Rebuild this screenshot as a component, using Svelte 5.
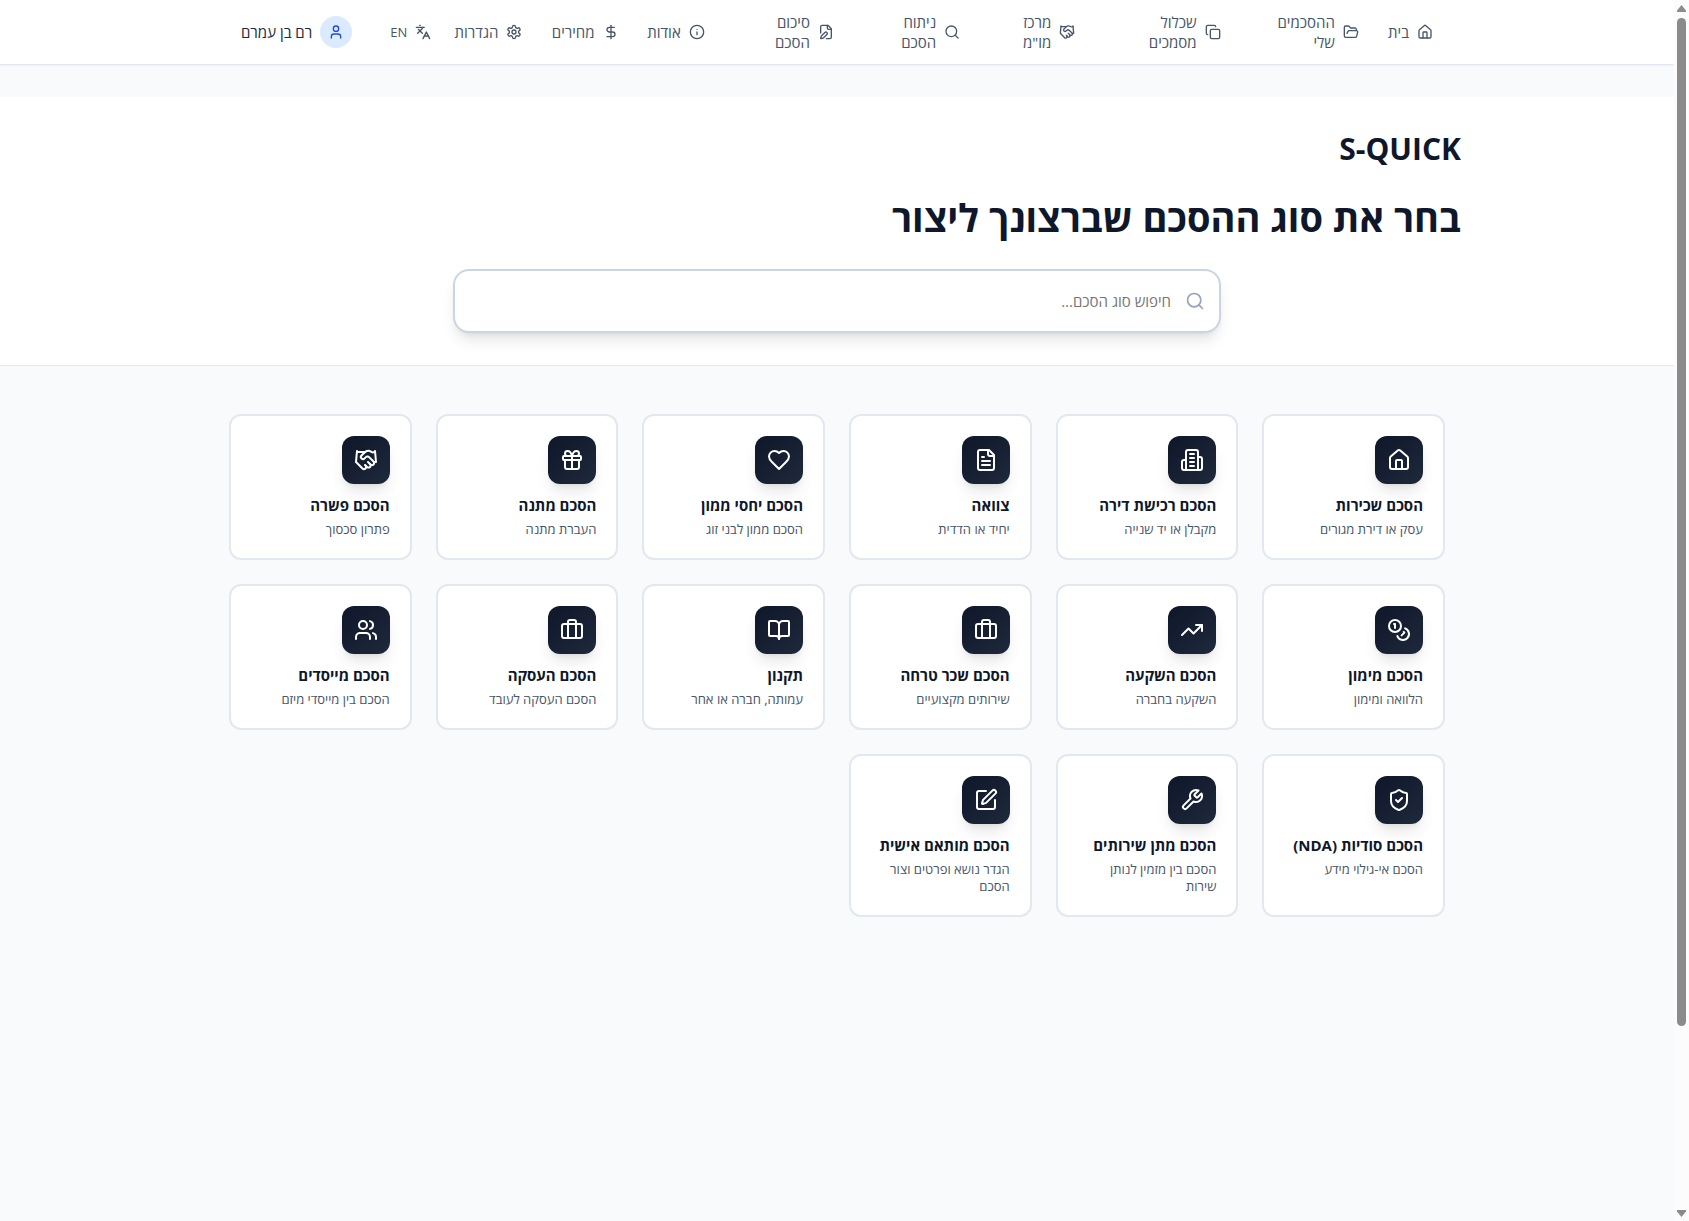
<script lang="ts">
  const icons: Record<string, string[]> = {
    house: [
      "M15 21v-8a1 1 0 0 0-1-1h-4a1 1 0 0 0-1 1v8",
      "M3 10a2 2 0 0 1 .709-1.528l7-5.999a2 2 0 0 1 2.582 0l7 5.999A2 2 0 0 1 21 10v9a2 2 0 0 1-2 2H5a2 2 0 0 1-2-2z",
    ],
    folder: [
      "m6 14 1.5-2.9A2 2 0 0 1 9.24 10H20a2 2 0 0 1 1.94 2.5l-1.54 6a2 2 0 0 1-1.95 1.5H4a2 2 0 0 1-2-2V5a2 2 0 0 1 2-2h3.9a2 2 0 0 1 1.69.9l.81 1.2a2 2 0 0 0 1.67.9H18a2 2 0 0 1 2 2v2",
    ],
    copy: [
      "M10 8h10a2 2 0 0 1 2 2v10a2 2 0 0 1-2 2H10a2 2 0 0 1-2-2V10a2 2 0 0 1 2-2z",
      "M4 16c-1.1 0-2-.9-2-2V4c0-1.1.9-2 2-2h10c1.1 0 2 .9 2 2",
    ],
    handshake: [
      "m11 17 2 2a1 1 0 1 0 3-3",
      "m14 14 2.5 2.5a1 1 0 1 0 3-3l-3.88-3.88a3 3 0 0 0-4.24 0l-.88.88a1 1 0 1 1-3-3l2.81-2.81a5.79 5.79 0 0 1 7.06-.87l.47.28a2 2 0 0 0 1.42.25L21 4",
      "m21 3 1 11h-2",
      "M3 3 2 14l6.5 6.5a1 1 0 1 0 3-3",
      "M3 4h8",
    ],
    search: ["M19 11a8 8 0 1 1-16 0 8 8 0 0 1 16 0z", "m21 21-4.3-4.3"],
    filePen: [
      "M12.5 22H18a2 2 0 0 0 2-2V7l-5-5H6a2 2 0 0 0-2 2v9.5",
      "M14 2v4a2 2 0 0 0 2 2h4",
      "M13.378 15.626a1 1 0 1 0-3.004-3.004l-5.01 5.012a2 2 0 0 0-.506.854l-.837 2.87a.5.5 0 0 0 .62.62l2.87-.837a2 2 0 0 0 .854-.506z",
    ],
    info: ["M22 12a10 10 0 1 1-20 0 10 10 0 0 1 20 0z", "M12 16v-4", "M12 8h.01"],
    dollar: ["M12 2v20", "M17 5H9.5a3.5 3.5 0 0 0 0 7h5a3.5 3.5 0 0 1 0 7H6"],
    settings: [
      "M12.22 2h-.44a2 2 0 0 0-2 2v.18a2 2 0 0 1-1 1.73l-.43.25a2 2 0 0 1-2 0l-.15-.08a2 2 0 0 0-2.73.73l-.22.38a2 2 0 0 0 .73 2.73l.15.1a2 2 0 0 1 1 1.72v.51a2 2 0 0 1-1 1.74l-.15.09a2 2 0 0 0-.73 2.73l.22.38a2 2 0 0 0 2.73.73l.15-.08a2 2 0 0 1 2 0l.43.25a2 2 0 0 1 1 1.73V20a2 2 0 0 0 2 2h.44a2 2 0 0 0 2-2v-.18a2 2 0 0 1 1-1.73l.43-.25a2 2 0 0 1 2 0l.15.08a2 2 0 0 0 2.73-.73l.22-.39a2 2 0 0 0-.73-2.73l-.15-.08a2 2 0 0 1-1-1.74v-.5a2 2 0 0 1 1-1.74l.15-.09a2 2 0 0 0 .73-2.73l-.22-.38a2 2 0 0 0-2.73-.73l-.15.08a2 2 0 0 1-2 0l-.43-.25a2 2 0 0 1-1-1.73V4a2 2 0 0 0-2-2z",
      "M15 12a3 3 0 1 1-6 0 3 3 0 0 1 6 0z",
    ],
    languages: ["m5 8 6 6", "m4 14 6-6 2-3", "M2 5h12", "M7 2h1", "m22 22-5-10-5 10", "M14 18h6"],
    user: ["M19 21v-2a4 4 0 0 0-4-4H9a4 4 0 0 0-4 4v2", "M16 7a4 4 0 1 1-8 0 4 4 0 0 1 8 0z"],
    building: [
      "M6 22V4a2 2 0 0 1 2-2h8a2 2 0 0 1 2 2v18Z",
      "M6 12H4a2 2 0 0 0-2 2v6a2 2 0 0 0 2 2h2",
      "M18 9h2a2 2 0 0 1 2 2v9a2 2 0 0 1-2 2h-2",
      "M10 6h4",
      "M10 10h4",
      "M10 14h4",
      "M10 18h4",
    ],
    fileText: [
      "M15 2H6a2 2 0 0 0-2 2v16a2 2 0 0 0 2 2h12a2 2 0 0 0 2-2V7Z",
      "M14 2v4a2 2 0 0 0 2 2h4",
      "M10 9H8",
      "M16 13H8",
      "M16 17H8",
    ],
    heart: [
      "M19 14c1.49-1.46 3-3.21 3-5.5A5.5 5.5 0 0 0 16.5 3c-1.76 0-3 .5-4.5 2-1.5-1.5-2.74-2-4.5-2A5.5 5.5 0 0 0 2 8.5c0 2.3 1.5 4.05 3 5.5l7 7Z",
    ],
    gift: [
      "M4 8h16a1 1 0 0 1 1 1v2a1 1 0 0 1-1 1H4a1 1 0 0 1-1-1V9a1 1 0 0 1 1-1z",
      "M12 8v13",
      "M19 12v7a2 2 0 0 1-2 2H7a2 2 0 0 1-2-2v-7",
      "M7.5 8a2.5 2.5 0 0 1 0-5A4.8 8 0 0 1 12 8a4.8 8 0 0 1 4.5-5 2.5 2.5 0 0 1 0 5",
    ],
    coins: [
      "M14 8a6 6 0 1 1-12 0 6 6 0 0 1 12 0z",
      "M18.09 10.37A6 6 0 1 1 10.34 18",
      "M7 6h1v4",
      "m16.71 13.88.7.71-2.82 2.82",
    ],
    trending: ["m22 7-8.5 8.5-5-5L2 17", "M16 7h6v6"],
    briefcase: [
      "M16 20V4a2 2 0 0 0-2-2h-4a2 2 0 0 0-2 2v16",
      "M4 6h16a2 2 0 0 1 2 2v10a2 2 0 0 1-2 2H4a2 2 0 0 1-2-2V8a2 2 0 0 1 2-2z",
    ],
    book: [
      "M12 7v14",
      "M3 18a1 1 0 0 1-1-1V4a1 1 0 0 1 1-1h5a4 4 0 0 1 4 4 4 4 0 0 1 4-4h5a1 1 0 0 1 1 1v13a1 1 0 0 1-1 1h-6a3 3 0 0 0-3 3 3 3 0 0 0-3-3z",
    ],
    users: [
      "M16 21v-2a4 4 0 0 0-4-4H6a4 4 0 0 0-4 4v2",
      "M13 7a4 4 0 1 1-8 0 4 4 0 0 1 8 0z",
      "M22 21v-2a4 4 0 0 0-3-3.87",
      "M16 3.13a4 4 0 0 1 0 7.75",
    ],
    shield: [
      "M20 13c0 5-3.5 7.5-7.66 8.95a1 1 0 0 1-.67-.01C7.5 20.5 4 18 4 13V6a1 1 0 0 1 1-1c2 0 4.5-1.2 6.24-2.72a1.17 1.17 0 0 1 1.52 0C14.51 3.81 17 5 19 5a1 1 0 0 1 1 1z",
      "m9 12 2 2 4-4",
    ],
    wrench: [
      "M14.7 6.3a1 1 0 0 0 0 1.4l1.6 1.6a1 1 0 0 0 1.4 0l3.77-3.77a6 6 0 0 1-7.94 7.94l-6.91 6.91a2.12 2.12 0 0 1-3-3l6.91-6.91a6 6 0 0 1 7.94-7.94l-3.76 3.76z",
    ],
    squarePen: [
      "M12 3H5a2 2 0 0 0-2 2v14a2 2 0 0 0 2 2h14a2 2 0 0 0 2-2v-7",
      "M18.375 2.625a1 1 0 0 1 3 3l-9.013 9.014a2 2 0 0 1-.853.505l-2.873.84a.5.5 0 0 1-.62-.62l.84-2.873a2 2 0 0 1 .506-.852z",
    ],
  };

  const navItems = [
    { label: "בית", icon: "house" },
    { label: "ההסכמים שלי", icon: "folder" },
    { label: "שכלול מסמכים", icon: "copy" },
    { label: 'מרכז מו"מ', icon: "handshake" },
    { label: "ניתוח הסכם", icon: "search" },
    { label: "סיכום הסכם", icon: "filePen" },
    { label: "אודות", icon: "info" },
    { label: "מחירים", icon: "dollar" },
    { label: "הגדרות", icon: "settings" },
  ];

  const agreements = [
    { title: "הסכם שכירות", text: "עסק או דירת מגורים", icon: "house" },
    { title: "הסכם רכישת דירה", text: "מקבלן או יד שנייה", icon: "building" },
    { title: "צוואה", text: "יחיד או הדדית", icon: "fileText" },
    { title: "הסכם יחסי ממון", text: "הסכם ממון לבני זוג", icon: "heart" },
    { title: "הסכם מתנה", text: "העברת מתנה", icon: "gift" },
    { title: "הסכם פשרה", text: "פתרון סכסוך", icon: "handshake" },
    { title: "הסכם מימון", text: "הלוואה ומימון", icon: "coins" },
    { title: "הסכם השקעה", text: "השקעה בחברה", icon: "trending" },
    { title: "הסכם שכר טרחה", text: "שירותים מקצועיים", icon: "briefcase" },
    { title: "תקנון", text: "עמותה, חברה או אחר", icon: "book" },
    { title: "הסכם העסקה", text: "הסכם העסקה לעובד", icon: "briefcase" },
    { title: "הסכם מייסדים", text: "הסכם בין מייסדי מיזם", icon: "users" },
    { title: "הסכם סודיות (NDA)", text: "הסכם אי-גילוי מידע", icon: "shield" },
    { title: "הסכם מתן שירותים", text: "הסכם בין מזמין לנותן שירות", icon: "wrench" },
    { title: "הסכם מותאם אישית", text: "הגדר נושא ופרטים וצור הסכם", icon: "squarePen" },
  ];

  let query = $state("");
  const visible = $derived(
    agreements.filter((a) => (a.title + " " + a.text).includes(query.trim()))
  );
</script>

{#snippet icon(name: string)}
  <svg class="icon" viewBox="0 0 24 24" aria-hidden="true">
    {#each icons[name] as d}
      <path {d} />
    {/each}
  </svg>
{/snippet}

<div class="window">
  <div class="page" dir="rtl">
    <header class="topbar">
      <div class="topbar-inner">
        <nav class="nav">
          {#each navItems as item}
            <a class="nav-item" href="#{item.icon}">
              {@render icon(item.icon)}
              <span class="nav-label">{item.label}</span>
            </a>
          {/each}
        </nav>
        <button class="lang" type="button">
          {@render icon("languages")}
          <span>EN</span>
        </button>
        <button class="account" type="button">
          <span class="avatar">{@render icon("user")}</span>
          <span>רם בן עמרם</span>
        </button>
      </div>
    </header>

    <section class="hero">
      <div class="hero-inner">
        <h1>S-QUICK</h1>
        <h2>בחר את סוג ההסכם שברצונך ליצור</h2>
        <label class="search">
          {@render icon("search")}
          <input
            type="text"
            placeholder="חיפוש סוג הסכם..."
            aria-label="חיפוש סוג הסכם"
            bind:value={query}
          />
        </label>
      </div>
    </section>

    <main class="cards">
      {#each visible as item}
        <button class="card" type="button">
          <span class="card-icon">{@render icon(item.icon)}</span>
          <span class="card-title">{item.title}</span>
          <span class="card-text">{item.text}</span>
        </button>
      {/each}
    </main>
  </div>

  <div class="scrollbar" aria-hidden="true">
    <svg class="arrow" viewBox="0 0 9 7"><path d="M4.5 0 9 5.5V7H0V5.5z" /></svg>
    <div class="track"><div class="thumb"></div></div>
    <svg class="arrow" viewBox="0 0 9 7"><path d="M4.5 7 9 1.5V0H0v1.5z" /></svg>
  </div>
</div>

<style>
  :global(body) {
    margin: 0;
    background: #f8fafc;
  }

  .window {
    display: flex;
    font-family: "Open Sans", "Noto Sans", sans-serif;
    color: #0f172a;
  }

  .window * {
    box-sizing: border-box;
  }

  .page {
    flex: 1;
    min-width: 0;
    min-height: 100vh;
    background: #f8fafc;
  }

  button {
    font: inherit;
    border: 0;
    background: none;
    cursor: pointer;
  }

  .icon {
    flex-shrink: 0;
    width: 16px;
    height: 16px;
    fill: none;
    stroke: currentColor;
    stroke-width: 2;
    stroke-linecap: round;
    stroke-linejoin: round;
  }

  .topbar {
    background: #fff;
    border-bottom: 1px solid #e2e8f0;
    box-shadow: 0 1px 2px rgb(0 0 0 / 5%);
  }

  .topbar-inner {
    display: flex;
    align-items: center;
    max-width: 1280px;
    height: 64px;
    margin: 0 auto;
    padding: 0 32px;
    font-size: 15px;
    font-weight: 500;
    line-height: 20px;
  }

  .nav {
    display: grid;
    flex: 1;
    grid-template-columns: 70fr 134fr 141fr 111fr 122fr 125fr 82fr 92fr 93fr;
    align-items: center;
    column-gap: 4px;
    min-width: 0;
  }

  .nav-item,
  .lang,
  .account {
    display: flex;
    align-items: center;
    gap: 8px;
    padding: 0 12px;
    color: #475569;
    text-decoration: none;
  }

  /* two-word labels break onto two lines */
  .nav-label {
    width: min-content;
  }

  .lang {
    flex-shrink: 0;
    padding: 0 10px;
    font-size: 13px;
  }

  .account {
    flex-shrink: 0;
    margin-inline-start: 16px;
    color: #1e293b;
  }

  .avatar {
    display: flex;
    align-items: center;
    justify-content: center;
    width: 32px;
    height: 32px;
    border-radius: 50%;
    background: #dbeafe;
    color: #1d4ed8;
  }

  .hero {
    margin-top: 32px;
    padding: 32px 0;
    background: #fff;
    border-bottom: 1px solid #e2e8f0;
  }

  .hero-inner {
    max-width: 1280px;
    margin: 0 auto;
    padding: 0 16px;
  }

  h1,
  h2 {
    margin: 0;
    font-weight: 700;
    line-height: 40px;
  }

  h1 {
    margin-bottom: 28px;
    font-size: 30px;
  }

  h2 {
    margin-bottom: 32px;
    font-size: 38px;
  }

  .search {
    display: flex;
    align-items: center;
    gap: 14px;
    max-width: 768px;
    height: 64px;
    margin: 0 auto;
    padding: 0 14px;
    border: 2px solid #cbd5e1;
    border-radius: 16px;
    background: #fff;
    color: #94a3b8;
    box-shadow:
      0 10px 15px -3px rgb(0 0 0 / 10%),
      0 4px 6px -4px rgb(0 0 0 / 10%);
  }

  .search .icon {
    width: 20px;
    height: 20px;
  }

  .search input {
    flex: 1;
    min-width: 0;
    height: 100%;
    padding: 0;
    border: 0;
    outline: 0;
    background: none;
    font: inherit;
    font-size: 15px;
    color: #0f172a;
  }

  .search input::placeholder {
    color: #757575;
  }

  .cards {
    display: grid;
    grid-template-columns: repeat(6, minmax(0, 1fr));
    gap: 24px;
    max-width: 1280px;
    margin: 0 auto;
    padding: 48px 32px;
  }

  .card {
    display: flex;
    flex-direction: column;
    align-items: flex-start;
    padding: 20px;
    border: 2px solid #e2e8f0;
    border-radius: 12px;
    background: #fff;
    text-align: start;
  }

  .card-icon {
    display: flex;
    align-items: center;
    justify-content: center;
    width: 48px;
    height: 48px;
    margin-bottom: 12px;
    border-radius: 12px;
    background: linear-gradient(to bottom right, #0f172a, #1e293b);
    color: #fff;
    box-shadow:
      0 10px 15px -3px rgb(0 0 0 / 10%),
      0 4px 6px -4px rgb(0 0 0 / 10%);
  }

  .card-icon .icon {
    width: 24px;
    height: 24px;
  }

  .card-title {
    margin-bottom: 6px;
    font-size: 15px;
    font-weight: 700;
    line-height: 19px;
    color: #0f172a;
  }

  .card-text {
    font-size: 13px;
    line-height: 17px;
    color: #475569;
  }

  .scrollbar {
    position: sticky;
    top: 0;
    display: flex;
    flex-direction: column;
    align-items: center;
    gap: 6px;
    width: 15px;
    height: 100vh;
    padding: 5px 0 4px;
    background: #fcfcfc;
  }

  .arrow {
    width: 9px;
    height: 7px;
    fill: #8b8b8b;
  }

  .track {
    flex: 1;
    width: 9px;
  }

  .thumb {
    height: 85%;
    border-radius: 5px;
    background: #8b8b8b;
  }
</style>
